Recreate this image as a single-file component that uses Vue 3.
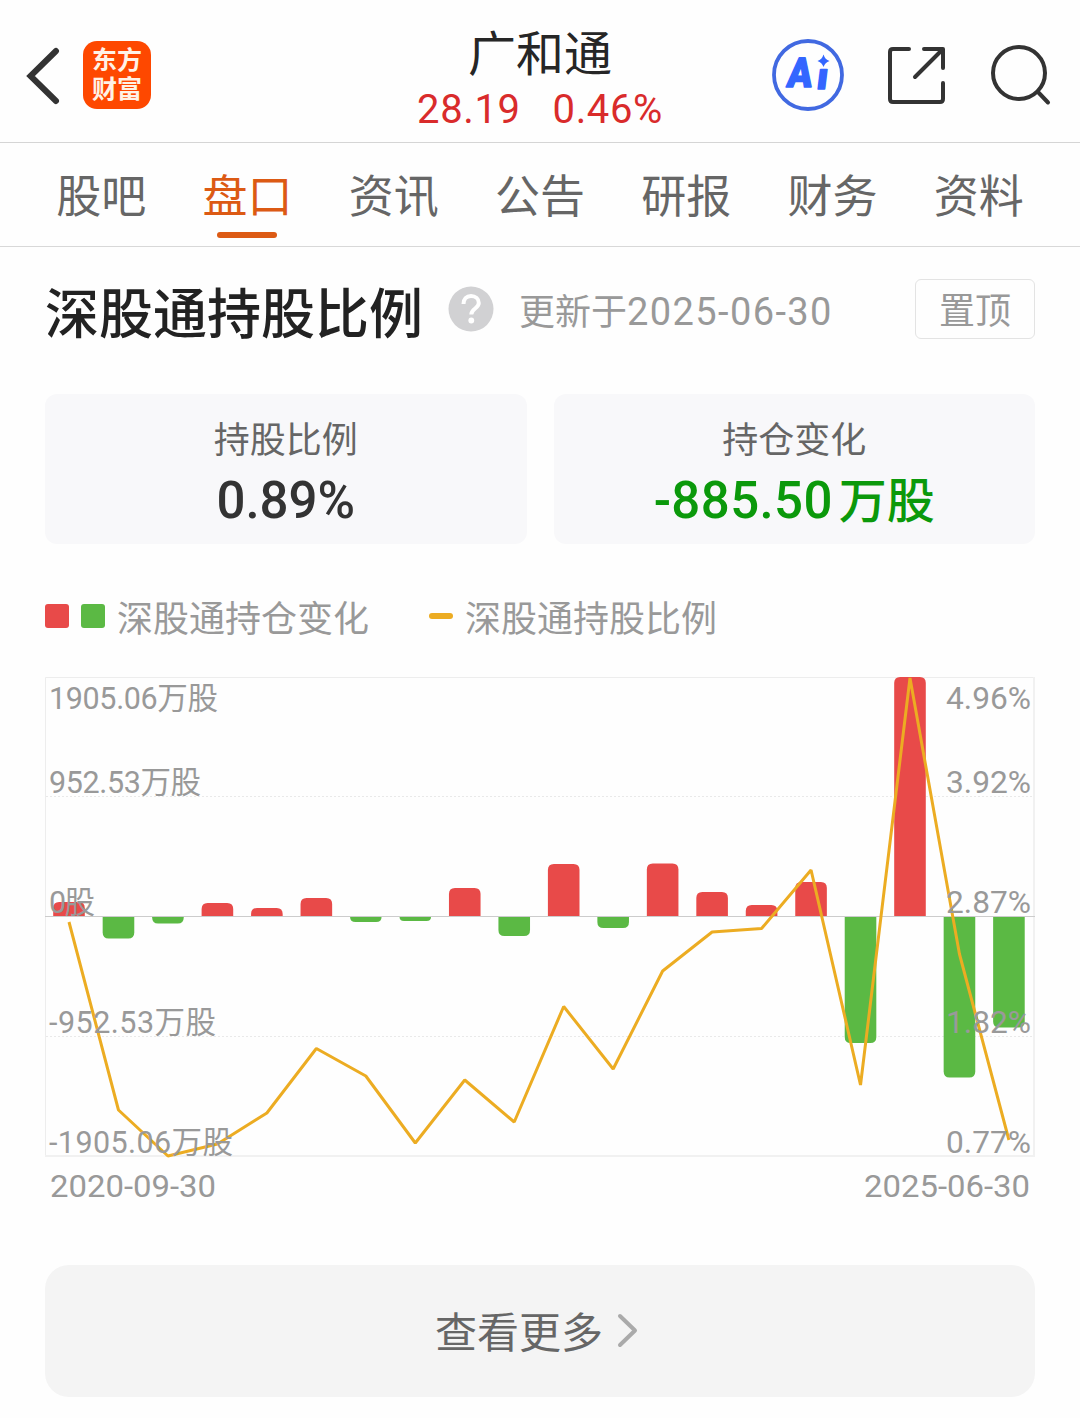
<script setup>
import { ref } from 'vue'

const tabs = ['股吧', '盘口', '资讯', '公告', '研报', '财务', '资料']
const active = ref('盘口')

// chart geometry
const zeroY = 239.5
const barWidth = 31.6
const centerX = (i) => 24 + i * 49.47

// bar lengths in px, positive goes up
const changes = [14.5, -22, -7, 13.5, 8.5, 18.5, -5.5, -4.5, 28.5, -19.5, 52.5, -11.5, 53, 24.5, 11.5, 34.5, -126.5, 239.5, -161, -111]
const ratios = [245, 433, 479, 467, 436, 371.5, 399, 466, 403, 445, 329.5, 392, 294, 255, 251.5, 193, 408, 1, 277, 463]

const linePoints = ratios.map((y, i) => `${centerX(i)},${y}`).join(' ')

// only the outer end of a bar is rounded
function barPath(value, i) {
  const left = centerX(i) - barWidth / 2
  const right = left + barWidth
  const r = Math.min(6, Math.abs(value))
  const end = zeroY - value
  const inner = value > 0 ? end + r : end - r
  return `M${left} ${zeroY}V${inner}Q${left} ${end} ${left + r} ${end}H${right - r}Q${right} ${end} ${right} ${inner}V${zeroY}Z`
}

const leftLabels = [
  { text: '1905.06万股', y: 32, width: 169 },
  { text: '952.53万股', y: 116, width: 152 },
  { text: '0股', y: 236, width: 46 },
  { text: '-952.53万股', y: 356, width: 167 },
  { text: '-1905.06万股', y: 476, width: 184 }
]
const rightLabels = [
  { text: '4.96%', y: 32 },
  { text: '3.92%', y: 116 },
  { text: '2.87%', y: 236 },
  { text: '1.82%', y: 356 },
  { text: '0.77%', y: 476 }
]
</script>

<template>
  <div class="page">
    <header class="topbar">
      <div class="side">
        <svg class="back" width="40" height="60" viewBox="0 0 40 60">
          <path d="M33 6L7.500 31L33 56" fill="none" stroke="#333" stroke-width="6" stroke-linecap="round" />
        </svg>
        <div class="logo"><span>东方</span><span>财富</span></div>
      </div>
      <div class="stock">
        <h1>广和通</h1>
        <p class="quote"><span>28.19</span><span>0.46%</span></p>
      </div>
      <div class="side right">
        <svg width="72" height="72" viewBox="0 0 72 72">
          <circle cx="36" cy="36" r="34" fill="none" stroke="#4169e1" stroke-width="3.800" />
          <g class="ai" transform="skewX(-7)">
            <text x="20" y="48" textLength="25" lengthAdjust="spacingAndGlyphs">A</text>
            <text x="50" y="50" textLength="11" lengthAdjust="spacingAndGlyphs" class="stem">ı</text>
          </g>
          <path d="M51.500 15.500Q53 20.500 57.500 22Q53 23.500 51.500 28Q50 23.500 45.500 22Q50 20.500 51.500 15.500Z" fill="#3366ff" />
        </svg>
        <svg width="60" height="60" viewBox="0 0 60 60" fill="none" stroke="#333" stroke-width="4" stroke-linecap="round" stroke-linejoin="round">
          <path d="M22 4H6Q3 4 3 7V54Q3 57 6 57H53Q56 57 56 54V38" />
          <path d="M37 4H56V23M55 5L28 32" />
        </svg>
        <svg width="62" height="62" viewBox="0 0 62 62" fill="none" stroke="#333" stroke-width="4" stroke-linecap="round">
          <circle cx="29" cy="29" r="26" />
          <path d="M48 48L58 58.500" />
        </svg>
      </div>
    </header>

    <nav class="tabs">
      <button v-for="tab in tabs" :key="tab" :class="{ active: tab === active }" @click="active = tab">{{ tab }}</button>
    </nav>

    <main>
      <div class="heading">
        <h2>深股通持股比例</h2>
        <svg class="help" width="46" height="46" viewBox="0 0 46 46">
          <circle cx="23" cy="23" r="22.500" fill="#d1d1d3" />
          <path d="M15.500 18C15.500 13 18.500 10 23 10C27.500 10 30.800 13 30.800 17C30.800 22.500 23.300 22.500 23.300 28.500" fill="none" stroke="#fff" stroke-width="4" />
          <circle cx="23.300" cy="34.500" r="2.900" fill="#fff" />
        </svg>
        <span class="updated">更新于<b>2025-06-30</b></span>
        <button class="pin">置顶</button>
      </div>

      <div class="cards">
        <div class="card">
          <p class="label">持股比例</p>
          <p class="value">0.89%</p>
        </div>
        <div class="card">
          <p class="label">持仓变化</p>
          <p class="value down">-885.50<span>万股</span></p>
        </div>
      </div>

      <div class="legend">
        <i class="square red"></i>
        <i class="square green"></i>
        <span>深股通持仓变化</span>
        <i class="dash"></i>
        <span>深股通持股比例</span>
      </div>

      <svg class="chart" width="990" height="530" viewBox="0 0 990 530">
        <path d="M0.500 479.500V0.500H989" fill="none" stroke="#ededed" />
        <path d="M989 0V479H0" fill="none" stroke="#f1f1f1" stroke-width="2" />
        <path d="M1 119.500H988M1 359.500H988" stroke="#e9e9e9" stroke-dasharray="2 2" />
        <path v-for="(value, i) in changes" :key="i" :d="barPath(value, i)" :fill="value > 0 ? '#e84a49' : '#5bb944'" />
        <path d="M0 239.500H990" stroke="#ccc" />
        <polyline :points="linePoints" fill="none" stroke="#ecac22" stroke-width="3" stroke-linejoin="bevel" />
        <text v-for="l in leftLabels" :key="l.text" x="4" :y="l.y" :textLength="l.width">{{ l.text }}</text>
        <text v-for="l in rightLabels" :key="l.text" x="901" :y="l.y" textLength="85" lengthAdjust="spacingAndGlyphs">{{ l.text }}</text>
        <text x="5" y="519.500" textLength="166" lengthAdjust="spacingAndGlyphs">2020-09-30</text>
        <text x="819" y="519.500" textLength="166" lengthAdjust="spacingAndGlyphs">2025-06-30</text>
      </svg>

      <button class="more">
        <span>查看更多</span>
        <svg width="22" height="36" viewBox="0 0 22 36">
          <path d="M3 4L18 18.500L3 33" fill="none" stroke="#aaa" stroke-width="4" stroke-linecap="round" stroke-linejoin="round" />
        </svg>
      </button>
    </main>
  </div>
</template>

<style>
body{
  background-color: #fff;
}
</style>

<style scoped>
.page{
  width: 1080px;
  height: 1418px;
  overflow: hidden;
  background-color: #fefefe;
  color: #262626;
  font-family: Roboto, "Noto Sans CJK SC", sans-serif;
}
h1, h2, p{
  margin: 0;
  font-weight: 400;
}
button{
  font-family: inherit;
  border: none;
  padding: 0;
  background: none;
  cursor: pointer;
}
svg{
  display: block;
}
.topbar{
  height: 142px;
  border-bottom: 1px solid #d5d5d5;
  display: grid;
  grid-template-columns: 1fr 260px 1fr;
}
.side{
  display: flex;
  align-items: center;
  padding: 0 0 0 23px;
  height: 150px;
}
.side.right{
  padding: 0 28px 0 0;
  justify-content: flex-end;
  gap: 43px;
}
.logo{
  width: 68px;
  height: 68px;
  margin-left: 20px;
  border-radius: 14px;
  background-color: #fe4800;
  color: #fff2e6;
  display: flex;
  flex-direction: column;
  justify-content: center;
  align-items: center;
  font-size: 25px;
  font-weight: 700;
  line-height: 29px;
}
.ai{
  font-size: 41px;
  font-weight: 900;
  fill: #3366ff;
  stroke: #3366ff;
  stroke-width: 1.5px;
  stroke-linejoin: round;
}
.ai .stem{
  font-size: 37px;
}
.stock{
  text-align: center;
}
.stock h1{
  font-size: 48px;
  line-height: 60px;
  padding-top: 25px;
}
.quote{
  display: flex;
  justify-content: center;
  gap: 32px;
  font-size: 40px;
  line-height: 49px;
  letter-spacing: 0.6px;
  color: #d92b2b;
  white-space: nowrap;
}
.tabs{
  height: 103px;
  border-bottom: 1px solid #d8d8d8;
  padding: 0 28px;
  display: flex;
}
.tabs button{
  flex: 1;
  height: 103px;
  padding-top: 7px;
  font-size: 45px;
  line-height: 96px;
  color: #666;
  position: relative;
}
.tabs .active{
  color: #dc5a14;
}
.tabs .active::after{
  content: "";
  position: absolute;
  left: 50%;
  bottom: 8px;
  width: 60px;
  height: 6px;
  margin-left: -30px;
  border-radius: 3px;
  background-color: #dc5a14;
}
main{
  padding: 0 45px;
}
.heading{
  height: 60px;
  padding-top: 32px;
  display: flex;
  align-items: center;
}
h2{
  font-size: 54px;
  line-height: 60px;
  padding-top: 13px;
  font-weight: 500;
  color: #222;
  white-space: nowrap;
}
.help{
  margin-left: 25px;
}
.updated{
  margin-left: 25px;
  font-size: 36px;
  color: #999;
  white-space: nowrap;
}
.updated b{
  font-size: 38px;
  font-weight: 400;
  letter-spacing: 1.4px;
}
.pin{
  width: 120px;
  height: 60px;
  box-sizing: border-box;
  margin-left: auto;
  padding-top: 6px;
  border: 1px solid #e3e3e3;
  border-radius: 6px;
  font-size: 36px;
  line-height: 52px;
  color: #999;
}
.cards{
  display: flex;
  gap: 27px;
  margin-top: 55px;
}
.card{
  flex: 1;
  height: 150px;
  border-radius: 12px;
  background-color: #f8f8fa;
  text-align: center;
}
.label{
  font-size: 36px;
  line-height: 50px;
  padding-top: 22px;
  color: #666;
}
.value{
  font-size: 51px;
  line-height: 64px;
  padding-top: 3px;
  font-weight: 500;
  color: #333;
}
.down{
  color: #0b990b;
  letter-spacing: 0.4px;
}
.down span{
  font-size: 48px;
  margin-left: 6px;
  letter-spacing: 0;
}
.legend{
  display: flex;
  align-items: center;
  height: 50px;
  margin-top: 47px;
  font-size: 36px;
  color: #999;
}
.square{
  width: 24px;
  height: 24px;
  margin-right: 12px;
  border-radius: 3px;
}
.red{
  background-color: #e84a49;
}
.green{
  background-color: #5bb944;
}
.dash{
  width: 24px;
  height: 6px;
  margin: 0 12px 0 60px;
  border-radius: 3px;
  background-color: #ecac22;
}
.chart{
  margin-top: 36px;
  font-size: 30.5px;
  fill: #999;
}
.more{
  width: 990px;
  height: 132px;
  margin-top: 58px;
  padding: 0 6px 2px 0;
  border-radius: 24px;
  background-color: #f4f4f4;
  color: #666;
  font-size: 42px;
  display: flex;
  justify-content: center;
  align-items: center;
  gap: 14px;
}
.more span{
  padding-bottom: 2px;
}
</style>
